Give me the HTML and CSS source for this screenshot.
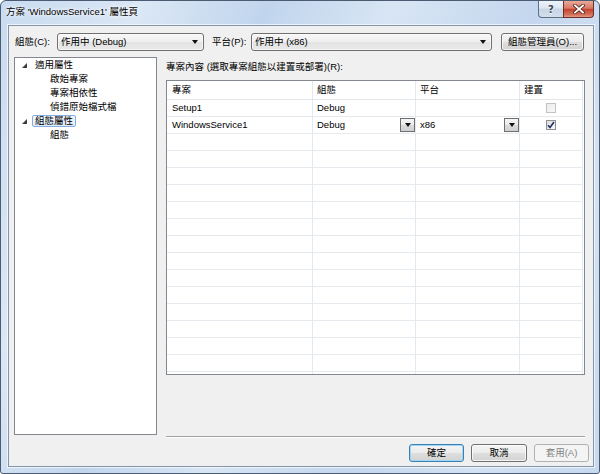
FILE: index.html
```html
<!DOCTYPE html>
<html lang="zh-Hant">
<head>
<meta charset="utf-8">
<title>方案 'WindowsService1' 屬性頁</title>
<link rel="stylesheet" href="styles.css">
</head>
<body>
<div class="window">
  <div class="titlebar">
    <span class="title">方案 'WindowsService1' 屬性頁</span>
    <div class="caption-btns">
      <span class="cbtn help">?</span>
      <span class="cbtn close">
        <svg width="12" height="10" viewBox="0 0 12 10"><path d="M2 1.5L10 8.5M10 1.5L2 8.5" stroke="#5a2a22" stroke-width="3.6" stroke-linecap="square"/><path d="M2 1.5L10 8.5M10 1.5L2 8.5" stroke="#fff" stroke-width="1.8" stroke-linecap="square"/></svg>
      </span>
    </div>
  </div>
  <div class="client">
    <div class="toprow">
      <span class="lbl lbl-conf">組態(C):</span>
      <div class="combo combo-conf"><span>作用中 (Debug)</span><i class="arrow"></i></div>
      <span class="lbl lbl-plat">平台(P):</span>
      <div class="combo combo-plat"><span>作用中 (x86)</span><i class="arrow"></i></div>
      <button class="btn btn-mgr">組態管理員(O)...</button>
    </div>
    <div class="main">
      <div class="tree">
        <div class="node parent"><svg class="exp" width="5" height="5" viewBox="0 0 5 5"><polygon points="5,0 5,5 0,5" fill="#3c3c3c"/></svg><span class="label">適用屬性</span></div>
        <div class="node child"><span class="label">啟始專案</span></div>
        <div class="node child"><span class="label">專案相依性</span></div>
        <div class="node child"><span class="label">偵錯原始檔式檔</span></div>
        <div class="node parent"><svg class="exp" width="5" height="5" viewBox="0 0 5 5"><polygon points="5,0 5,5 0,5" fill="#3c3c3c"/></svg><span class="label selected">組態屬性</span></div>
        <div class="node child"><span class="label">組態</span></div>
      </div>
      <div class="right">
        <div class="caption">專案內容 (選取專案組態以建置或部署)(R):</div>
        <div class="grid">
          <div class="row head">
            <div class="cell first">專案</div>
            <div class="cell">組態</div>
            <div class="cell">平台</div>
            <div class="cell">建置</div>
          </div>
          <div class="row">
            <div class="cell first">Setup1</div>
            <div class="cell">Debug</div>
            <div class="cell"></div>
            <div class="cell center"><span class="chk disabled"></span></div>
          </div>
          <div class="row">
            <div class="cell first">WindowsService1</div>
            <div class="cell dd"><span>Debug</span><span class="ddbtn"><i class="arrow"></i></span></div>
            <div class="cell dd"><span>x86</span><span class="ddbtn"><i class="arrow"></i></span></div>
            <div class="cell center"><span class="chk"><svg width="8" height="8" viewBox="0 0 8 8"><polyline points="1,4.2 3,6.5 7,1" fill="none" stroke="#1f3161" stroke-width="1.6"/></svg></span></div>
          </div>
          <div class="row"><div class="cell first"></div><div class="cell"></div><div class="cell"></div><div class="cell"></div></div>
          <div class="row"><div class="cell first"></div><div class="cell"></div><div class="cell"></div><div class="cell"></div></div>
          <div class="row"><div class="cell first"></div><div class="cell"></div><div class="cell"></div><div class="cell"></div></div>
          <div class="row"><div class="cell first"></div><div class="cell"></div><div class="cell"></div><div class="cell"></div></div>
          <div class="row"><div class="cell first"></div><div class="cell"></div><div class="cell"></div><div class="cell"></div></div>
          <div class="row"><div class="cell first"></div><div class="cell"></div><div class="cell"></div><div class="cell"></div></div>
          <div class="row"><div class="cell first"></div><div class="cell"></div><div class="cell"></div><div class="cell"></div></div>
          <div class="row"><div class="cell first"></div><div class="cell"></div><div class="cell"></div><div class="cell"></div></div>
          <div class="row"><div class="cell first"></div><div class="cell"></div><div class="cell"></div><div class="cell"></div></div>
          <div class="row"><div class="cell first"></div><div class="cell"></div><div class="cell"></div><div class="cell"></div></div>
          <div class="row"><div class="cell first"></div><div class="cell"></div><div class="cell"></div><div class="cell"></div></div>
          <div class="row"><div class="cell first"></div><div class="cell"></div><div class="cell"></div><div class="cell"></div></div>
          <div class="row"><div class="cell first"></div><div class="cell"></div><div class="cell"></div><div class="cell"></div></div>
          <div class="row"><div class="cell first"></div><div class="cell"></div><div class="cell"></div><div class="cell"></div></div>
          <div class="row"><div class="cell first"></div><div class="cell"></div><div class="cell"></div><div class="cell"></div></div>
        </div>
        <div class="sep"></div>
      </div>
    </div>
    <div class="buttons">
      <button class="btn dlg default">確定</button>
      <button class="btn dlg cancel">取消</button>
      <button class="btn dlg disabled" disabled>套用(A)</button>
    </div>
  </div>
</div>
</body>
</html>
```

FILE: styles.css
```css
* { box-sizing: border-box; margin: 0; padding: 0; }
html, body { width: 600px; height: 474px; overflow: hidden; background: #fff; }
body {
  font-family: "Liberation Sans", "Noto Sans CJK TC", sans-serif;
  font-size: 9.5px;
  color: #000;
}
.window {
  width: 600px;
  height: 474px;
  border: 1px solid #4a5b72;
  border-radius: 6px 6px 3px 3px;
  background: linear-gradient(112deg, #c8dbf0 0%, #dbe7f5 18%, #c0d5ed 34%, #d8e5f4 50%, #c4d7ee 68%, #d4e2f3 84%, #c6d9ef 100%);
  display: flex;
  flex-direction: column;
  overflow: hidden;
}
.titlebar {
  height: 24px;
  flex-shrink: 0;
  display: flex;
  align-items: flex-start;
}
.title {
  flex: 1;
  padding: 5px 0 0 5px;
  line-height: 12px;
  text-shadow: 0 0 5px #fff, 0 0 3px #fff;
}
.caption-btns {
  display: flex;
  margin-right: 5px;
}
.cbtn {
  height: 17px;
  display: flex;
  align-items: center;
  justify-content: center;
  border: 1px solid #5f6f86;
  border-top: none;
}
.help {
  width: 25px;
  border-radius: 0 0 0 4px;
  border-right: none;
  background: linear-gradient(#eef3fa 0%, #dde6f1 45%, #c7d5e6 50%, #d3deeb 100%);
  color: #3a4658;
  font-family: "DejaVu Sans", sans-serif;
  font-size: 10px;
  font-weight: bold;
  text-shadow: 0 1px 0 #fff;
}
.close {
  width: 31px;
  border-radius: 0 0 4px 0;
  border-color: #6d3028;
  background: linear-gradient(#eaa898 0%, #d97a66 45%, #c5432f 52%, #d4705a 85%, #e49a84 100%);
}
.client {
  flex: 1;
  margin: 0 5px 6px 7px;
  border: 1px solid #8494a9;
  box-shadow: 0 0 0 1px rgba(255, 255, 255, 0.65);
  background: #f0f0f0;
  padding: 7px 4px 0 5px;
  display: flex;
  flex-direction: column;
}
.toprow {
  display: flex;
  align-items: center;
  height: 18px;
  padding-left: 1px;
}
.lbl { line-height: 12px; white-space: nowrap; }
.lbl-conf { width: 42px; }
.lbl-plat { width: 39px; margin-left: 8px; }
.combo {
  height: 18px;
  border: 1px solid #707070;
  border-radius: 3px;
  background: linear-gradient(#f7f7f7 0%, #efefef 48%, #e3e3e3 52%, #e9e9e9 100%);
  box-shadow: inset 0 0 0 1px rgba(255, 255, 255, 0.6);
  display: flex;
  align-items: center;
  justify-content: space-between;
  padding: 0 5px 0 3px;
  line-height: 12px;
}
.combo-conf { width: 147px; }
.combo-plat { width: 241px; }
.arrow {
  display: block;
  width: 0;
  height: 0;
  border-left: 3.5px solid transparent;
  border-right: 3.5px solid transparent;
  border-top: 4px solid #111;
}
.btn {
  height: 18px;
  border: 1px solid #707070;
  border-radius: 3px;
  background: linear-gradient(#f4f4f4 0%, #ececec 48%, #dedede 52%, #d3d3d3 100%);
  box-shadow: inset 0 0 0 1px rgba(255, 255, 255, 0.75);
  font: inherit;
  color: #000;
  line-height: 12px;
}
.btn-mgr { width: 83px; margin-left: 9px; }
.main {
  display: flex;
  margin-top: 6px;
  height: 381px;
}
.tree {
  width: 143px;
  height: 378px;
  border: 1px solid #828790;
  background: #fff;
}
.node {
  height: 14px;
  display: flex;
  align-items: center;
}
.node.parent { padding-left: 7px; }
.node.child { padding-left: 32px; }
.exp { margin-right: 5px; flex-shrink: 0; }
.label {
  display: inline-block;
  padding: 0 2px;
  border: 1px solid transparent;
  border-radius: 2px;
  line-height: 10px;
  white-space: nowrap;
}
.label.selected {
  border-color: #84acdd;
  background: linear-gradient(#f2f8fe, #dfecfb);
}
.right {
  margin-left: 9px;
  width: 419px;
  display: flex;
  flex-direction: column;
}
.caption {
  height: 23px;
  padding-top: 4px;
  line-height: 12px;
}
.grid {
  height: 295px;
  border: 1px solid #828790;
  background: #fff;
  overflow: hidden;
}
.row {
  display: grid;
  grid-template-columns: 146px 103px 104px 63px;
  height: 17px;
}
.row.head { height: 19px; }
.cell {
  border-right: 1px solid #e3e9f0;
  border-bottom: 1px solid #e6eaef;
  padding-left: 4px;
  display: flex;
  align-items: center;
  line-height: 12px;
  white-space: nowrap;
  overflow: hidden;
}
.head .cell { border-bottom-color: #e2e5e9; }
.cell.first { padding-left: 5px; }
.cell.dd { justify-content: space-between; padding-right: 0; }
.cell.center { justify-content: center; padding-left: 0; }
.ddbtn {
  width: 15px;
  height: 14px;
  border: 1px solid #6f6f6f;
  background: linear-gradient(#f6f6f6 0%, #ebebeb 48%, #dbdbdb 52%, #d0d0d0 100%);
  display: flex;
  align-items: center;
  justify-content: center;
}
.chk {
  width: 10px;
  height: 10px;
  border: 1px solid #8e8f8f;
  background: linear-gradient(135deg, #dcdcdc, #fafafa);
  display: flex;
  align-items: center;
  justify-content: center;
}
.chk.disabled {
  border-color: #c2c2c2;
  background: linear-gradient(135deg, #ececec, #f8f8f8);
}
.sep {
  margin-top: auto;
  height: 2px;
  border-top: 1px solid #a0a0a0;
  border-bottom: 1px solid #fff;
}
.buttons {
  display: flex;
  justify-content: flex-end;
  gap: 7px;
  margin-top: 6px;
}
.dlg { width: 55px; }
.dlg.cancel { width: 56px; }
.dlg.default {
  border-color: #3c7fb1;
  box-shadow: inset 0 0 0 1px #9fd8f6;
}
.dlg.disabled {
  border-color: #adb2b5;
  background: #f4f4f4;
  box-shadow: none;
  color: #838383;
}
```
